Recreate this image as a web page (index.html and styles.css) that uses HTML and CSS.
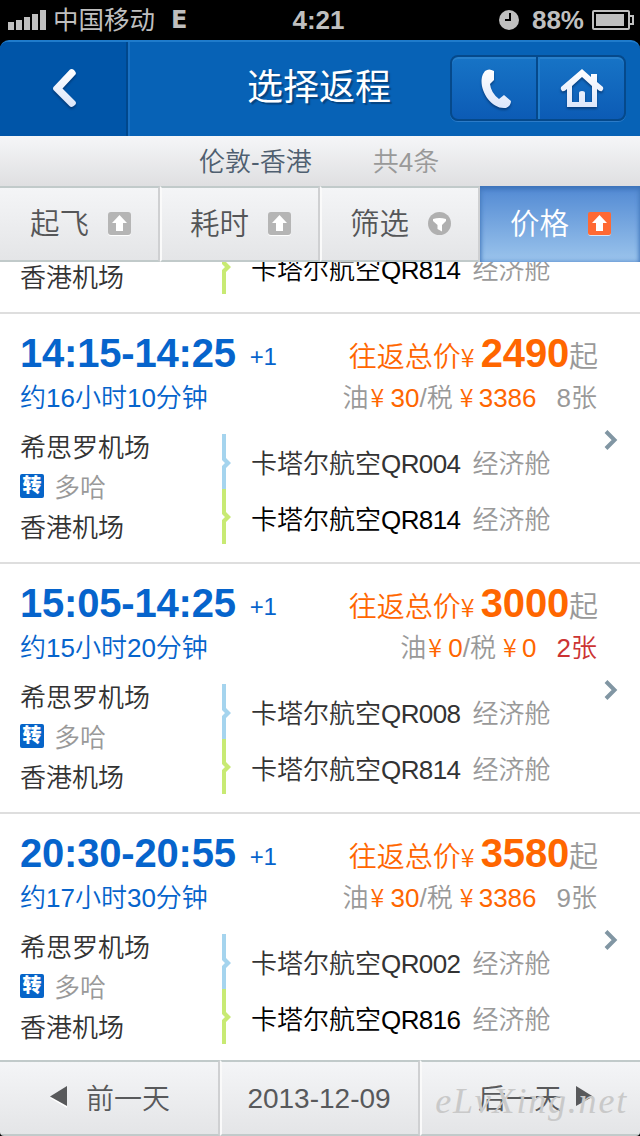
FILE: index.html
```html
<!DOCTYPE html>
<html lang="zh-CN">
<head>
    <meta charset="UTF-8">
    <meta name="viewport" content="width=device-width, initial-scale=1.0">
    <title>选择返程</title>
    <link rel="stylesheet" href="styles.css">
</head>
<body>
    <!-- Phone status bar -->
    <div class="status-bar">
        <div class="status-left">
            <svg class="signal" width="38" height="20" viewBox="0 0 38 20"><path d="M0 12h6v8H0zM8 10h6v10H8zM16 7h6v13h-6zM24 4h6v16h-6zM32 0h6v20h-6z"/></svg>
            <span class="carrier">中国移动</span>
            <span class="network">E</span>
        </div>
        <span class="clock">4:21</span>
        <div class="status-right">
            <svg width="20" height="20" viewBox="0 0 20 20"><circle cx="10" cy="10" r="10" fill="#bfbfbf"/><path d="M11 3v7H6" fill="none" stroke="#000" stroke-width="2"/></svg>
            <span class="percent">88%</span>
            <svg width="42" height="20" viewBox="0 0 42 20"><rect x="1" y="1" width="36" height="18" rx="1" fill="none" stroke="#bfbfbf" stroke-width="2"/><path d="M4 4h28v12H4z" fill="#bfbfbf"/><path d="M38 6h3v8h-3" fill="none" stroke="#bfbfbf" stroke-width="2"/></svg>
        </div>
    </div>

    <header class="header">
        <a class="back">
            <svg width="26" height="42" viewBox="0 0 26 42"><defs><linearGradient id="shine" x1="0" y1="0" x2="0" y2="1"><stop offset="0" stop-color="#fff"/><stop offset="1" stop-color="#dce6fa"/></linearGradient></defs><path d="M18 1.500Q20 .5 22 2L23.500 4Q24.500 6 23 7L10.500 20.500L23 33Q25 35 23 37L21 38.500Q19 39.500 17.500 38L1.500 22Q.5 20.500 1.500 19Z" fill="url(#shine)"/></svg>
        </a>
        <h1>选择返程</h1>
        <div class="header-buttons">
            <a><svg width="30" height="40" viewBox="0 0 30 40"><path d="M4 2Q8-1 13 2V11L9 15Q10 24 18 30L23 26L30 32Q30 37 25 39C9 41-4 18 2 5Z" fill="url(#shine)"/></svg></a>
            <a><svg width="44" height="40" viewBox="0 0 44 40"><path fill-rule="evenodd" d="M22 0L31 8V5H37V13L43 18Q44 20 42 22Q40 23 37 20V38H7V20Q4 23 2 22Q0 20 1 18ZM22 8L12 17V33H19V24Q19 22 22 22Q25 22 25 24V33H32V17Z" fill="url(#shine)"/></svg></a>
        </div>
    </header>

    <div class="route">
        <span class="cities">伦敦-香港</span>
        <span class="count">共4条</span>
    </div>

    <nav class="tabs">
        <a class="tab"><span>起飞</span><svg class="sort" width="23" height="24" viewBox="0 0 23 24"><rect y="1" width="23" height="23" rx="3" fill="#fff"/><rect width="23" height="23" rx="3" fill="#b5b5b5"/><path d="M11.500 3L19 11H15V19H8V11H4Z" fill="#fff"/></svg></a>
        <a class="tab"><span>耗时</span><svg class="sort" width="23" height="24" viewBox="0 0 23 24"><rect y="1" width="23" height="23" rx="3" fill="#fff"/><rect width="23" height="23" rx="3" fill="#b5b5b5"/><path d="M11.500 3L19 11H15V19H8V11H4Z" fill="#fff"/></svg></a>
        <a class="tab"><span>筛选</span><svg class="sort" width="23" height="24" viewBox="0 0 23 24"><circle cx="11.500" cy="11.500" r="11.500" fill="#b0b0b0"/><path d="M5 7Q11.500 5 18 7L18 9L14 13V19.500L9.500 17V13L5 9Z" fill="#fff"/></svg></a>
        <a class="tab active"><span>价格</span><svg class="sort" width="23" height="24" viewBox="0 0 23 24"><rect y="1" width="23" height="23" rx="3" fill="#fff" opacity=".7"/><rect width="23" height="23" rx="2" fill="#ff6933"/><path d="M11.500 3L19 11H15V19H8V11H4Z" fill="#fff"/></svg></a>
    </nav>

    <main class="list">
        <!-- Last rows of the flight scrolled under the tabs -->
        <section class="flight scrolled">
            <div class="details">
                <div class="stops"><div>香港机场</div></div>
                <svg class="legs" width="10" height="110" viewBox="0 0 10 110"><path d="M0 0H4V24L9 29L4 34V55H0V32L3 29L0 26Z" fill="#a5d4ee"/><path d="M0 55H4V78L9 83L4 88V110H0V86L3 83L0 80Z" fill="#c8ea73"/></svg>
                <div class="airlines"><div class="second">卡塔尔航空<b>QR814</b><span>经济舱</span></div></div>
            </div>
        </section>

        <section class="flight">
            <div class="top">
                <div class="time">14:15-14:25<span>+1</span></div>
                <div class="price">往返总价<i>¥</i><b>2490</b><em>起</em></div>
            </div>
            <div class="sub">
                <div class="duration">约16小时10分钟</div>
                <div class="tax">油<i>¥</i><b>30</b>/税<i class="wide">¥</i><b>3386</b><span class="seats">8张</span></div>
            </div>
            <div class="details">
                <div class="stops"><div>希思罗机场</div><div class="transfer"><span class="badge">转</span>多哈</div><div>香港机场</div></div>
                <svg class="legs" width="10" height="110" viewBox="0 0 10 110"><path d="M0 0H4V24L9 29L4 34V55H0V32L3 29L0 26Z" fill="#a5d4ee"/><path d="M0 55H4V78L9 83L4 88V110H0V86L3 83L0 80Z" fill="#c8ea73"/></svg>
                <div class="airlines"><div>卡塔尔航空<b>QR004</b><span>经济舱</span></div><div class="second">卡塔尔航空<b>QR814</b><span>经济舱</span></div></div>
                <svg class="more" width="14" height="22" viewBox="0 0 14 22"><path d="M2 2.500L10.500 11L2 19.500" fill="none" stroke="#8196a3" stroke-width="4"/></svg>
            </div>
        </section>

        <section class="flight">
            <div class="top">
                <div class="time">15:05-14:25<span>+1</span></div>
                <div class="price">往返总价<i>¥</i><b>3000</b><em>起</em></div>
            </div>
            <div class="sub">
                <div class="duration">约15小时20分钟</div>
                <div class="tax">油<i>¥</i><b>0</b>/税<i class="wide">¥</i><b>0</b><span class="seats few">2张</span></div>
            </div>
            <div class="details">
                <div class="stops"><div>希思罗机场</div><div class="transfer"><span class="badge">转</span>多哈</div><div>香港机场</div></div>
                <svg class="legs" width="10" height="110" viewBox="0 0 10 110"><path d="M0 0H4V24L9 29L4 34V55H0V32L3 29L0 26Z" fill="#a5d4ee"/><path d="M0 55H4V78L9 83L4 88V110H0V86L3 83L0 80Z" fill="#c8ea73"/></svg>
                <div class="airlines"><div>卡塔尔航空<b>QR008</b><span>经济舱</span></div><div>卡塔尔航空<b>QR814</b><span>经济舱</span></div></div>
                <svg class="more" width="14" height="22" viewBox="0 0 14 22"><path d="M2 2.500L10.500 11L2 19.500" fill="none" stroke="#8196a3" stroke-width="4"/></svg>
            </div>
        </section>

        <section class="flight">
            <div class="top">
                <div class="time">20:30-20:55<span>+1</span></div>
                <div class="price">往返总价<i>¥</i><b>3580</b><em>起</em></div>
            </div>
            <div class="sub">
                <div class="duration">约17小时30分钟</div>
                <div class="tax">油<i>¥</i><b>30</b>/税<i class="wide">¥</i><b>3386</b><span class="seats">9张</span></div>
            </div>
            <div class="details">
                <div class="stops"><div>希思罗机场</div><div class="transfer"><span class="badge">转</span>多哈</div><div>香港机场</div></div>
                <svg class="legs" width="10" height="110" viewBox="0 0 10 110"><path d="M0 0H4V24L9 29L4 34V55H0V32L3 29L0 26Z" fill="#a5d4ee"/><path d="M0 55H4V78L9 83L4 88V110H0V86L3 83L0 80Z" fill="#c8ea73"/></svg>
                <div class="airlines"><div>卡塔尔航空<b>QR002</b><span>经济舱</span></div><div class="second">卡塔尔航空<b>QR816</b><span>经济舱</span></div></div>
                <svg class="more" width="14" height="22" viewBox="0 0 14 22"><path d="M2 2.500L10.500 11L2 19.500" fill="none" stroke="#8196a3" stroke-width="4"/></svg>
            </div>
        </section>
    </main>

    <footer class="days">
        <a class="day prev"><svg width="18" height="22" viewBox="0 0 18 22"><path d="M0 12L17 2V22Z" fill="#fff"/><path d="M0 10.500L17 0V20Z" fill="#58595b"/></svg>前一天</a>
        <span class="day date">2013-12-09</span>
        <a class="day next">后一天<svg width="18" height="22" viewBox="0 0 18 22"><path d="M0 0L17 10.500L0 20Z" fill="#58595b"/></svg></a>
        <span class="watermark">eLvXing.net</span>
    </footer>
</body>
</html>
```

FILE: styles.css
```css
* {
    margin: 0;
    padding: 0;
    box-sizing: border-box;
}

body {
    width: 640px;
    height: 1136px;
    overflow: hidden;
    background: #000;
    font-family: "Liberation Sans", "Noto Sans CJK SC", sans-serif;
    font-weight: 350;
    font-size: 26px;
    color: #333;
    white-space: nowrap;
}

svg {
    display: block;
    flex: none;
}

i, em {
    font-style: normal;
}

/* Status bar */
.status-bar {
    display: grid;
    grid-template-columns: 1fr auto 1fr;
    align-items: center;
    height: 40px;
    padding: 0 6px 0 8px;
    color: #bfbfbf;
    line-height: 40px;
}

.status-left, .status-right {
    display: flex;
    align-items: center;
}

.status-right {
    justify-content: flex-end;
}

.signal {
    fill: #bfbfbf;
}

.carrier {
    margin-left: 7px;
    font-weight: 400;
    font-size: 25.5px;
}

.network {
    margin-left: 16px;
    font-family: "DejaVu Sans", sans-serif;
    font-weight: bold;
    font-size: 24px;
}

.clock {
    margin-right: 5px;
}

.clock, .percent {
    font-weight: bold;
}

.percent {
    margin: 0 8px 0 13px;
}

/* Header */
.header {
    display: grid;
    grid-template-columns: 128px 1fr 190px;
    height: 96px;
    background: #0762b6;
    border-top: 2px solid #1f7bcb;
    border-radius: 9px 9px 0 0;
    color: #fff;
}

.back {
    display: flex;
    align-items: center;
    padding: 0 0 0 52px;
    background: #0055a8;
    border-right: 2px solid #00478c;
    border-radius: 7px 0 0 0;
}

.back svg, .header-buttons svg {
    filter: drop-shadow(0 2px 1px rgba(0, 40, 90, 0.6));
}

.header h1 {
    padding-left: 117px;
    border-left: 2px solid #1870c3;
    font-size: 36px;
    font-weight: 400;
    line-height: 92px;
    text-shadow: 2px 2px 1px #064480;
}

.header-buttons {
    display: grid;
    grid-template-columns: 1fr 1fr;
    width: 176px;
    height: 66px;
    margin-top: 13px;
    border: 2px solid #05498b;
    border-radius: 8px;
    background: linear-gradient(#1774c6, #0c5bb5);
    box-shadow: 0 1px 0 #2b7bc8, inset 0 2px 0 #2880cc;
}

.header-buttons a {
    display: flex;
    align-items: center;
    justify-content: center;
    padding: 2px 0 0 2px;
}

.header-buttons a + a {
    margin-left: -2px;
    border-left: 2px solid #05498b;
    box-shadow: inset 2px 0 0 #207bca;
}

/* Route line */
.route {
    display: flex;
    gap: 61px;
    height: 50px;
    padding-left: 199px;
    background: linear-gradient(#f5f6f8, #dfdfe1);
    line-height: 52px;
}

.cities {
    color: #4f5f70;
}

.count {
    color: #999;
}

/* Sort tabs */
.tabs {
    display: grid;
    grid-template-columns: repeat(4, 160px);
    height: 76px;
}

.tab {
    display: flex;
    align-items: center;
    justify-content: space-between;
    padding: 0 27px 0 28px;
    background: linear-gradient(#f4f5f7, #e4e5e7);
    border-top: 2px solid #c1caca;
    border-bottom: 2px solid #c1caca;
    border-right: 2px solid #cfd0d2;
    border-left: 2px solid #fafafa;
    font-size: 29.500px;
    color: #555658;
}

.tab span {
    height: 46px;
    line-height: 46px;
}

.tab:first-child {
    padding-left: 30px;
    border-left: none;
}

.tab.active {
    padding: 0 29px 0 30px;
    background: linear-gradient(#5189d3, #9bc4ec);
    border: none;
    box-shadow: inset 0 3px 5px #3b72b8, inset 0 0 5px #5a8dcc;
    color: #fff;
}

/* Flights */
.list {
    height: 798px;
    overflow: hidden;
    background: #fff;
}

.flight {
    height: 250px;
    padding: 17px 22px 0 20px;
    border-bottom: 2px solid #dedede;
}

.top, .sub {
    display: flex;
    justify-content: space-between;
    padding-right: 20px;
}

.top {
    height: 44px;
    line-height: 44px;
}

.time {
    font-size: 40px;
    font-weight: bold;
    letter-spacing: -0.2px;
    color: #0664cc;
}

.time span {
    display: inline-block;
    margin-left: 14px;
    font-size: 24px;
    font-weight: 400;
    line-height: 26px;
    vertical-align: 2px;
}

.price {
    font-size: 28px;
    color: #ff6600;
}

.price i, .tax i {
    display: inline-block;
    width: 20px;
    font-family: "Noto Sans CJK SC", sans-serif;
    font-size: 25px;
    line-height: 1;
    text-align: left;
}

.price b {
    font-size: 40px;
    font-weight: bold;
    letter-spacing: -0.2px;
}

.price em {
    font-size: 29px;
    color: #999;
}

.sub {
    height: 44px;
    margin-top: 1px;
    padding-right: 21px;
    line-height: 44px;
}

.duration {
    color: #0664cc;
}

.tax {
    color: #999;
}

.tax i {
    width: 22px;
    padding-left: 2px;
    color: #ff6600;
}

.tax i.wide {
    width: 26px;
    padding-left: 7px;
}

.tax b {
    font-weight: 400;
    color: #ff6600;
}

.seats {
    margin-left: 20px;
}

.seats.few {
    color: #cc3333;
}

.details {
    display: flex;
    height: 120px;
    margin-top: 8px;
}

.stops {
    width: 202px;
    line-height: 41px;
}

.stops div {
    height: 40px;
}

.transfer {
    display: flex;
    align-items: center;
    color: #999;
}

.badge {
    width: 24px;
    height: 24px;
    margin: -4px 10px 0 0;
    border-radius: 2px;
    background: #0664c8;
    color: #fff;
    font-size: 19px;
    font-weight: 900;
    line-height: 23px;
    text-align: center;
}

.legs {
    margin-top: 6px;
}

.airlines {
    flex: 1;
    padding: 8px 0 0 19px;
    line-height: 57px;
}

.airlines div {
    height: 56px;
}

.airlines b {
    font-weight: 400;
    letter-spacing: -0.6px;
}

.airlines span {
    margin-left: 12px;
    color: #999;
}

.second {
    color: #000;
}

.second span {
    color: #999;
}

.more {
    margin-top: 1px;
}

.flight.scrolled {
    display: flex;
    align-items: flex-end;
    height: 52px;
    padding-top: 0;
}

.scrolled .details {
    align-items: flex-end;
    margin-bottom: 14px;
}

.scrolled .legs {
    margin: 0 0 4px;
}

/* Day switcher */
.days {
    position: relative;
    display: grid;
    grid-template-columns: 220px 200px 220px;
    height: 76px;
    border-radius: 0 0 4px 4px;
    overflow: hidden;
}

.day {
    display: flex;
    align-items: center;
    background: linear-gradient(#f4f5f7, #e4e5e7);
    border-top: 2px solid #c1caca;
    border-bottom: 2px solid #c1caca;
    border-right: 2px solid #cfd0d2;
    border-left: 2px solid #fafafa;
    padding-bottom: 2px;
    font-size: 28px;
    color: #58595b;
}

.prev {
    gap: 18px;
    padding-left: 50px;
    border-left: none;
}

.date {
    justify-content: center;
    padding: 2px 2px 0 0;
}

.next {
    gap: 14px;
    padding-left: 56px;
    border-right: none;
}

.watermark {
    position: absolute;
    right: 12px;
    bottom: 14px;
    font-family: "Liberation Serif", serif;
    font-style: italic;
    font-size: 36px;
    letter-spacing: 1.8px;
    color: #c9c9c9;
}
```
